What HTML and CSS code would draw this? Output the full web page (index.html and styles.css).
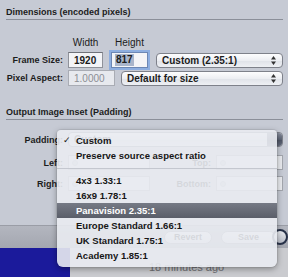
FILE: index.html
```html
<!DOCTYPE html>
<html lang="en">
<head>
    <meta charset="UTF-8">
    <title>Dimensions</title>
    <link rel="stylesheet" href="styles.css">
</head>
<body>
    <div class="window">
        <div class="panel">
            <div class="group">
                <h2 class="group-title">Dimensions (encoded pixels)</h2>
                <div class="col-heads">
                    <span class="col-w">Width</span>
                    <span class="col-h">Height</span>
                </div>
                <div class="row">
                    <label class="row-label">Frame Size:</label>
                    <span class="field field-w">1920</span>
                    <span class="field field-h focused"><span class="selected">817</span></span>
                    <span class="popup popup-size">Custom (2.35:1)
                        <svg class="arrows" width="5" height="9" viewBox="0 0 5 9"><path d="M0 3.5 L2.5 0 L5 3.5 Z M0 5.5 L2.5 9 L5 5.5 Z"/></svg>
                    </span>
                </div>
                <div class="row">
                    <label class="row-label">Pixel Aspect:</label>
                    <span class="field field-aspect disabled">1.0000</span>
                    <span class="popup popup-aspect">Default for size
                        <svg class="arrows" width="5" height="9" viewBox="0 0 5 9"><path d="M0 3.5 L2.5 0 L5 3.5 Z M0 5.5 L2.5 9 L5 5.5 Z"/></svg>
                    </span>
                </div>
            </div>

            <div class="group group-inset">
                <h2 class="group-title">Output Image Inset (Padding)</h2>
                <div class="row row-padding">
                    <label class="row-label">Padding:</label>
                    <span class="popup popup-padding">Custom<span class="cap"></span></span>
                </div>
                <div class="row row-inset">
                    <label class="row-label">Left:</label>
                    <span class="field field-inset field-left"><i class="knob"></i></span>
                    <label class="side-label">Top:</label>
                    <span class="field field-inset field-right"><i class="knob"></i></span>
                </div>
                <div class="row row-inset row-inset-2">
                    <label class="row-label">Right:</label>
                    <span class="field field-inset field-left"><i class="knob"></i></span>
                    <label class="side-label">Bottom:</label>
                    <span class="field field-inset field-right"><i class="knob"></i></span>
                </div>
            </div>
        </div>

        <div class="toolbar">
            <span class="pill pill-revert">Revert</span>
            <span class="pill pill-save">Save</span>
            <span class="round"></span>
        </div>

        <div class="statusbar">
            <div class="swatch"></div>
            <span class="status-text">18 minutes ago</span>
        </div>

        <!-- popup menu opened from the Padding button -->
        <ul class="menu">
            <li class="menu-item"><span class="check">✓</span>Custom</li>
            <li class="menu-item">Preserve source aspect ratio</li>
            <li class="menu-sep"></li>
            <li class="menu-item">4x3 1.33:1</li>
            <li class="menu-item">16x9 1.78:1</li>
            <li class="menu-item active">Panavision 2.35:1</li>
            <li class="menu-item">Europe Standard 1.66:1</li>
            <li class="menu-item">UK Standard 1.75:1</li>
            <li class="menu-item">Academy 1.85:1</li>
        </ul>
    </div>
</body>
</html>
```

FILE: styles.css
```css
* {
    margin: 0;
    padding: 0;
    box-sizing: border-box;
}

body {
    font-family: 'Liberation Sans', Arial, sans-serif;
    color: #1c1c1c;
    background-color: #c6cad4;
}

.window {
    position: relative;
    width: 288px;
    height: 277px;
    overflow: hidden;
    display: flex;
    flex-direction: column;
    background-color: #c6cad4;
}

.panel {
    flex: 1;
    padding: 6px 5px 0 6px;
}

.group-title {
    font-size: 9px;
    font-weight: bold;
    line-height: 12px;
    padding-bottom: 1px;
    border-bottom: 1px solid #8b8f99;
}

.group-inset {
    margin-top: 20px;
}

.col-heads {
    display: flex;
    margin-top: 17px;
    padding-left: 62px;
    font-size: 10px;
    line-height: 12px;
}

.col-w {
    width: 35px;
    text-align: center;
}

.col-h {
    width: 37px;
    margin-left: 8px;
    text-align: center;
}

.row {
    display: flex;
    align-items: center;
    height: 16px;
    margin-top: 3px;
}

.row + .row {
    margin-top: 2px;
}

.row-label {
    width: 57px;
    margin-right: 5px;
    text-align: right;
    font-size: 9px;
    font-weight: bold;
}

/* text fields */
.field {
    height: 16px;
    display: flex;
    align-items: center;
    padding-left: 5px;
    border: 1px solid #8f929a;
    border-top-color: #6f727a;
    background-color: #f3f4f7;
    font-size: 10px;
    font-weight: bold;
}

.field-w {
    width: 35px;
}

.field-h {
    width: 37px;
    margin-left: 8px;
    padding-left: 3px;
}

.focused {
    border-color: #6c87b4;
    box-shadow: 0 0 0 2px #8daee0;
}

.selected {
    background-color: #a9b5cb;
    padding: 0 1px;
    line-height: 12px;
}

.field-aspect {
    width: 47px;
}

.disabled {
    color: #8c8e94;
    font-weight: normal;
    background-color: #e7e9ee;
    border-color: #a9acb4;
}

/* popup buttons */
.popup {
    height: 15px;
    display: flex;
    align-items: center;
    justify-content: space-between;
    padding: 0 6px 0 5px;
    border: 1px solid #7e818a;
    border-radius: 4px;
    background: linear-gradient(#fdfdfe, #eceef2 50%, #dfe2e8 51%, #eef0f4);
    font-size: 10px;
    font-weight: bold;
}

.popup-size {
    width: 127px;
    margin-left: 8px;
}

.popup-aspect {
    flex: 1;
    margin-left: 6px;
}

.arrows {
    fill: #333;
}

.row-padding {
    margin-top: 12px;
    height: 15px;
}

.popup-padding {
    flex: 1;
    padding-right: 0;
    overflow: hidden;
}

.cap {
    width: 16px;
    height: 15px;
    margin-right: -1px;
    border-radius: 0 4px 4px 0;
    background: linear-gradient(#8d93a2, #5d6474 50%, #4b5262 51%, #6a7182);
}

.row-inset {
    margin-top: 8px;
    height: 15px;
}

.row-padding + .row-inset {
    margin-top: 8px;
}

.row + .row-inset-2 {
    margin-top: 6px;
}

.field-inset {
    height: 15px;
    padding-left: 3px;
    border-color: #a3a6ae;
    background-color: #e9ebef;
}

.field-left {
    width: 82px;
}

.field-right {
    flex: 1;
}

.knob {
    width: 6px;
    height: 6px;
    border-radius: 50%;
    background-color: #cdd0d7;
    border: 1px solid #b4b7bf;
}

.side-label {
    width: 61px;
    margin-right: 5px;
    text-align: right;
    font-size: 9px;
    font-weight: bold;
}

/* bottom bars */
.toolbar {
    height: 23px;
    display: flex;
    align-items: center;
    padding-left: 164px;
    background: linear-gradient(#b3b6bf, #a4a7b0);
    border-top: 1px solid #9a9da6;
}

.pill {
    height: 13px;
    display: flex;
    align-items: center;
    justify-content: center;
    border: 1px solid #8d9099;
    border-radius: 7px;
    background: linear-gradient(#f6f7f9, #dadde3);
    font-size: 9px;
    font-weight: bold;
}

.pill-revert {
    width: 48px;
}

.pill-save {
    width: 55px;
    margin-left: 9px;
}

.round {
    width: 16px;
    height: 16px;
    margin-left: -4px;
    flex-shrink: 0;
    border-radius: 50%;
    border: 2px solid #283249;
    background: linear-gradient(#e8eaef, #b9bdc7);
}

.statusbar {
    height: 29px;
    display: flex;
    background-color: #cacbcf;
}

.swatch {
    width: 70px;
    background-color: #1b1a9b;
}

.status-text {
    margin-left: 79px;
    margin-top: 13px;
    font-size: 11px;
    line-height: 13px;
    color: #6f6f72;
}

/* popup menu */
.menu {
    position: absolute;
    left: 57px;
    top: 130px;
    width: 220px;
    padding: 3px 0 4px;
    list-style: none;
    background-color: rgba(233, 235, 241, 0.9);
    border-radius: 4px 4px 6px 6px;
    box-shadow: 0 2px 6px rgba(0, 0, 0, 0.35), 0 0 0 1px rgba(0, 0, 0, 0.06);
    font-size: 9.5px;
    font-weight: bold;
    color: #161616;
}

.menu-item {
    position: relative;
    height: 15px;
    line-height: 15px;
    padding-left: 19px;
    white-space: nowrap;
}

.check {
    position: absolute;
    left: 6px;
    font-family: 'DejaVu Sans', sans-serif;
    font-size: 9px;
    font-weight: bold;
}

.menu-sep {
    margin: 5px 0 4px;
    border-top: 1px solid #c4c7cf;
}

.menu-item.active {
    color: #fff;
    background: linear-gradient(#767a85, #5a5e69);
}
```
